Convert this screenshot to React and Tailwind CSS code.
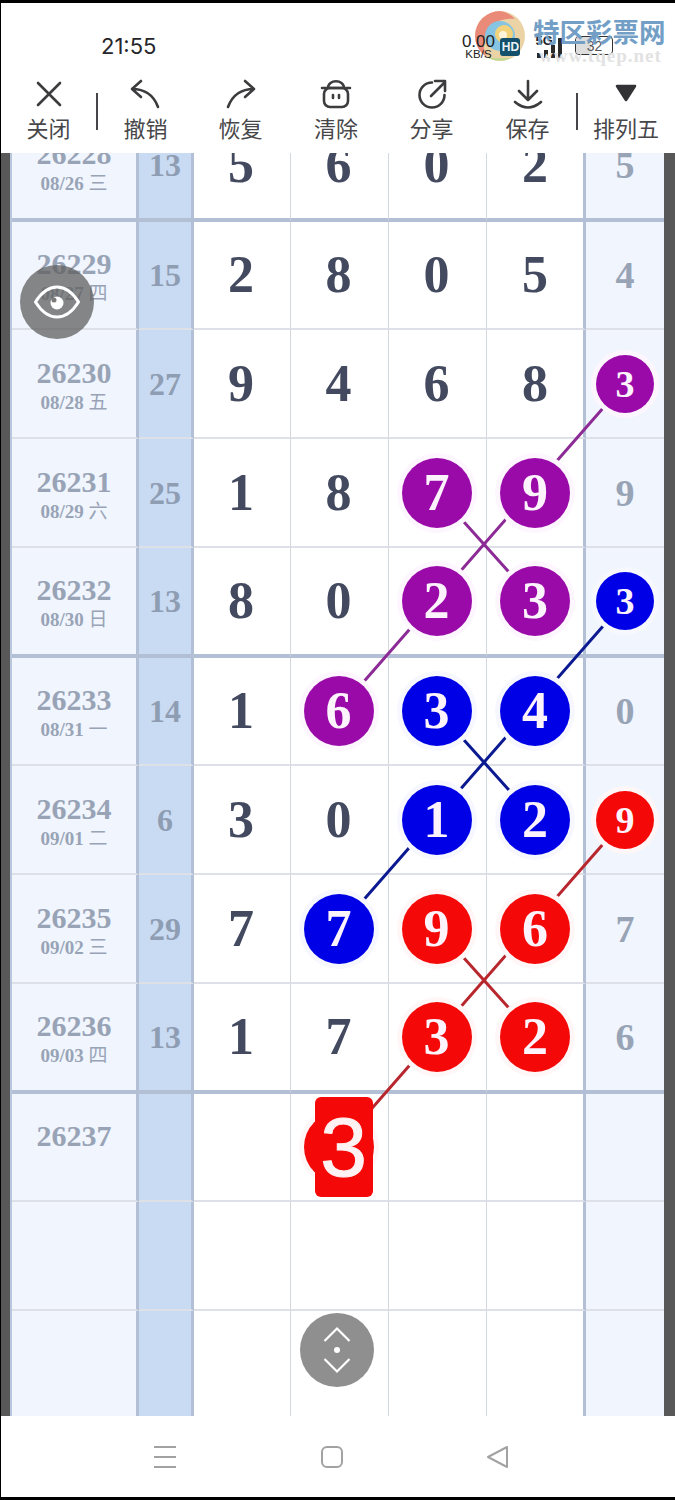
const rows = [
  { id: "26228", date: "08/26", wd: "三", sum: "13", n: ["5", "6", "0", "2"], r: "5", thick: true, first: true },
  { id: "26229", date: "08/27", wd: "四", sum: "15", n: ["2", "8", "0", "5"], r: "4", after: true },
  { id: "26230", date: "08/28", wd: "五", sum: "27", n: ["9", "4", "6", "8"], r: "3p" },
  { id: "26231", date: "08/29", wd: "六", sum: "25", n: ["1", "8", "7p", "9p"], r: "9" },
  { id: "26232", date: "08/30", wd: "日", sum: "13", n: ["8", "0", "2p", "3p"], r: "3b", thick: true },
  { id: "26233", date: "08/31", wd: "一", sum: "14", n: ["1", "6p", "3b", "4b"], r: "0", after: true },
  { id: "26234", date: "09/01", wd: "二", sum: "6", n: ["3", "0", "1b", "2b"], r: "9r" },
  { id: "26235", date: "09/02", wd: "三", sum: "29", n: ["7", "7b", "9r", "6r"], r: "7" },
  { id: "26236", date: "09/03", wd: "四", sum: "13", n: ["1", "7", "3r", "2r"], r: "6", thick: true },
  { id: "26237", date: "", wd: "", sum: "", n: ["", "3x", "", ""], r: "", after: true },
  { id: "", date: "", wd: "", sum: "", n: ["", "", "", ""], r: "" },
  { id: "", date: "", wd: "", sum: "", n: ["", "", "", ""], r: "" },
];

const serif = "font-['Liberation_Serif','Noto_Sans_CJK_SC',serif]";
const cjk = "font-['Noto_Sans_CJK_SC','Liberation_Sans',sans-serif]";

function Ball({ v, small }) {
  const d = v[0];
  const c = v[1];
  const bg = c === "p" ? "bg-[#9a0aa8]" : c === "b" ? "bg-[#0000e6]" : "bg-[#f50808]";
  const halo = c === "p" ? "shadow-[0_0_0_5px_#fdf6fe]" : c === "b" ? "shadow-[0_0_0_5px_#f7f8ff]" : "shadow-[0_0_0_5px_#fff7f7]";
  const size = small ? "w-[58px] h-[58px] text-[38px]" : "w-[70px] h-[70px] text-[52px]";
  return (
    <div className={`relative z-20 rounded-full flex items-center justify-center font-bold text-[#fdf3fd] leading-none ${bg} ${halo} ${size} ${serif}`}>
      {d}
    </div>
  );
}

function Pick() {
  return (
    <div className="relative z-20 w-[70px] h-[70px] rounded-full bg-[#f50808] shadow-[0_0_0_5px_#fff7f7] flex items-center justify-center">
      <div className="absolute left-[11px] top-[-15px] w-[58px] h-[100px] rounded-md bg-[#f50808] flex items-center justify-center text-[84px] leading-none font-normal text-[#fff2f2] [-webkit-text-stroke:1px_#fff2f2] font-['Liberation_Sans',sans-serif]">
        3
      </div>
    </div>
  );
}

function Row({ row }) {
  const bh = row.thick ? "h-[110px] border-b-4 border-b-[#b2bfd4]" : row.after ? "h-[108px] border-b-2 border-b-[#dde0e6]" : "h-[109px] border-b-2 border-b-[#dde0e6]";
  const num = `flex items-center justify-center text-[#434a5f] text-[52px] font-bold leading-none ${serif}`;
  return (
    <div className="grid grid-cols-[127px_55px_97px_98px_98px_99px_78px]">
      <div className={`${bh} border-r-[3px] border-r-[#b2bfd4] bg-[#f0f5fe] flex flex-col items-center justify-center pt-[2px] text-[#98a4b6] font-bold ${serif}`}>
        <div className="text-[30px] leading-[32px] h-[32px]">{row.id}</div>
        <div className="text-[19px] leading-[24px] h-[24px]">
          {row.date} <span className={`${cjk} font-normal`}>{row.wd}</span>
        </div>
      </div>
      <div className={`${bh} border-r-[3px] border-r-[#b2bfd4] bg-[#c9dbf3] flex items-center justify-center text-[#8f9db3] text-[32px] font-bold ${serif}`}>
        {row.sum}
      </div>
      {row.n.map((v, i) => (
        <div
          key={i}
          className={`${bh} ${i === 3 ? "border-r-[3px] border-r-[#b2bfd4]" : "border-r-[1.5px] border-r-[#d3d7de] pr-[2px]"} bg-white ${num}`}
        >
          {v === "3x" ? <Pick /> : v.length === 2 ? <Ball v={v} /> : v}
        </div>
      ))}
      <div className={`${bh} bg-[#f0f5fe] flex items-center justify-center text-[#98a4b6] text-[38px] font-bold leading-none ${serif}`}>
        {row.r.length === 2 ? <Ball v={row.r} small /> : row.r}
      </div>
    </div>
  );
}

function Ic({ children, fill }) {
  return (
    <svg width="40" height="40" viewBox="0 0 40 40" fill={fill || "none"} stroke="#3c3c3e" strokeWidth="2.6" strokeLinecap="round" strokeLinejoin="round">
      {children}
    </svg>
  );
}

function Tool({ w, label, children }) {
  return (
    <div className={`${w} flex flex-col items-center`}>
      <div className="h-[37px] -mt-[1px] flex items-start justify-center">{children}</div>
      <div className={`text-[22px] leading-[32px] text-[#47474a] whitespace-nowrap ${cjk}`}>{label}</div>
    </div>
  );
}

function Divider() {
  return <div className="w-[2px] h-[37px] bg-[#46464a] mt-[18px] shrink-0" />;
}

export default function App() {
  return (
    <div className="relative w-[675px] h-[1500px] overflow-hidden bg-white font-['Liberation_Sans',sans-serif]">
      <div className="h-[3px] bg-black" />
      <div className="relative h-[72px] border-l border-black flex items-start">
        <svg className="absolute left-[473px] top-[7px]" width="52" height="52" viewBox="0 0 52 52">
          <circle cx="26" cy="26" r="25" fill="#ecd3a6" />
          <path d="M26 1A25 25 0 0 0 1 26a25 25 0 0 0 12 21c-5-8-5-24 6-33 6-4 14-6 22-5A25 25 0 0 0 26 1z" fill="#ea8a78" />
          <path d="M13 47a25 25 0 0 0 24 1c-6 0-16 1-24-1z" fill="#bcd98f" />
          <circle cx="26" cy="26" r="15" fill="#85c4e2" />
          <circle cx="30" cy="24" r="9" fill="#f3d27c" />
          <circle cx="29" cy="25" r="4" fill="#fff4d8" />
        </svg>
        <div className="ml-[100px] mt-[29px] text-[22px] leading-[28px] text-[#26262a] font-['Inter',sans-serif]">21:55</div>
        <div className="relative ml-[301px] mt-[31px] w-[42px] text-[#222] flex flex-col items-center">
          <div className="text-[17px] leading-[15px]">0.00</div>
          <div className="text-[11.5px] leading-[11px]">KB/S</div>
        </div>
        <div className="relative mt-[35px] ml-[1px] w-[20px] h-[18px] rounded-[3px] bg-[#14506b] text-[#e8f2f5] text-[12px] font-bold leading-[18px] text-center">HD</div>
        <div className="relative mt-[31px] ml-[15px] w-[30px] h-[24px]">
          <div className="absolute left-0 top-0 text-[13px] font-bold leading-[13px] text-[#222]">5G</div>
          <div className="absolute left-[2px] bottom-0 flex items-end gap-[3px]">
            <div className="w-[4px] h-[5px] bg-[#2a2a2a]" />
            <div className="w-[4px] h-[8px] bg-[#2a2a2a]" />
            <div className="w-[4px] h-[13px] bg-[#2a2a2a]" />
            <div className="w-[4px] h-[20px] bg-[#2a2a2a]" />
          </div>
        </div>
        <div className="relative mt-[33px] ml-[10px] w-[38px] h-[19px] rounded-[4px] border border-[#333] overflow-hidden flex items-center justify-center text-[14px] text-[#555] leading-none">
          <div className="absolute left-0 top-0 bottom-0 w-[15px] bg-[#dddddd]" />
          <span className="relative">32</span>
        </div>

        <div className={`absolute left-[532px] top-[12px] text-[26.5px] leading-[32px] font-bold text-[#739fc6] whitespace-nowrap ${cjk}`}>特区彩票网</div>
        <div className={`absolute left-[538px] top-[43px] text-[19px] leading-[20px] font-bold text-[#e2e2e2] tracking-[1px] whitespace-nowrap ${serif}`}>www.tqep.net</div>
      </div>

      <div className="h-[78px] border-l border-black flex items-start bg-white">
        <Tool w="w-[95px]" label="关闭">
          <Ic>
            <path d="M9 9 L31 31 M31 9 L9 31" />
          </Ic>
        </Tool>
        <Divider />
        <Tool w="w-[95px]" label="撤销">
          <Ic>
            <path d="M15 7 L6 15 L15 23 M6 15 C20 15 28 22 32 33" />
          </Ic>
        </Tool>
        <Tool w="w-[95px]" label="恢复">
          <Ic>
            <path d="M24 7 L33 15 L24 23 M33 15 C19 15 11 22 7 33" />
          </Ic>
        </Tool>
        <Tool w="w-[96px]" label="清除">
          <Ic>
            <rect x="8" y="14" width="24" height="19" rx="6" />
            <path d="M12 14 C12 5 28 5 28 14 M6 14 H34 M17 21 V24 M23 21 V24" />
          </Ic>
        </Tool>
        <Tool w="w-[95px]" label="分享">
          <Ic>
            <path d="M20 8.5 A12.5 12.5 0 1 0 32.5 21 M19 22 L33 8 M23 7 H33 V17" />
          </Ic>
        </Tool>
        <Tool w="w-[97px]" label="保存">
          <Ic>
            <path d="M20 7 V26 M11 17 L20 26 L29 17 M7 28 Q20 39 33 28" />
          </Ic>
        </Tool>
        <Divider />
        <Tool w="w-[96px]" label="排列五">
          <Ic fill="#333336">
            <path d="M11 12 H29 L20 26 Z" stroke="#333336" />
          </Ic>
        </Tool>
      </div>

      <div className="relative h-[1263px] overflow-hidden flex">
        <div className="w-[10px] bg-[#585858] border-l border-black shrink-0" />
        <div className="w-[2px] bg-[#b8c6de] shrink-0" />
        <div className="w-[652px] -mt-[41px] shrink-0">
          {rows.map((r, i) => (
            <Row key={i} row={r} />
          ))}
        </div>
        <div className="w-[11px] bg-[#585858] shrink-0" />

        <svg className="absolute left-0 top-0 z-10" width="675" height="1263" viewBox="0 153 675 1263" fill="none" strokeWidth="3">
          <path d="M625 383 L339 710 M437 492 L535 601" stroke="#8c2a96" />
          <path d="M625 601 L339 928 M437 710 L535 819" stroke="#0c1a92" />
          <path d="M625 819 L339 1146 M437 928 L535 1037" stroke="#b8272e" />
        </svg>

        <div className="absolute left-[20px] top-[112px] z-30 w-[74px] h-[74px] rounded-full bg-[#5f5f5f]/75 flex items-center justify-center">
          <svg width="46" height="34" viewBox="0 0 46 34" fill="none" stroke="#fff" strokeWidth="3">
            <path d="M1.5 17 C9 5 16 2 23 2 C30 2 37 5 44.5 17 C37 29 30 32 23 32 C16 32 9 29 1.5 17 Z" />
            <circle cx="23" cy="18" r="6.5" fill="#fff" stroke="none" />
            <circle cx="20" cy="15" r="2.5" fill="#7a7a7a" stroke="none" />
          </svg>
        </div>

        <div className="absolute left-[300px] top-[1160px] z-30 w-[74px] h-[74px] rounded-full bg-[#8f8f8f] flex items-center justify-center">
          <svg width="30" height="50" viewBox="0 0 30 50" fill="none" stroke="#fff" strokeWidth="2.2">
            <path d="M2.5 16 L15 3.5 L27.5 16 M2.5 34 L15 46.5 L27.5 34" />
            <circle cx="15" cy="25" r="3" fill="#fff" stroke="none" />
          </svg>
        </div>
      </div>

      <div className="h-[81px] border-l border-black flex items-center pl-[153px] bg-white">
        <svg width="22" height="22" viewBox="0 0 22 22" stroke="#a2a2a2" strokeWidth="2" fill="none">
          <path d="M0 1 H22 M0 11 H22 M0 21 H22" />
        </svg>
        <svg className="ml-[145px]" width="22" height="22" viewBox="0 0 22 22" stroke="#a2a2a2" strokeWidth="2" fill="none">
          <rect x="1" y="1" width="20" height="20" rx="5" />
        </svg>
        <svg className="ml-[144px]" width="22" height="22" viewBox="0 0 22 22" stroke="#a2a2a2" strokeWidth="2" fill="none" strokeLinejoin="round">
          <path d="M1 11 L20 1 V21 Z" />
        </svg>
      </div>
      <div className="h-[3px] bg-black" />
    </div>
  );
}
